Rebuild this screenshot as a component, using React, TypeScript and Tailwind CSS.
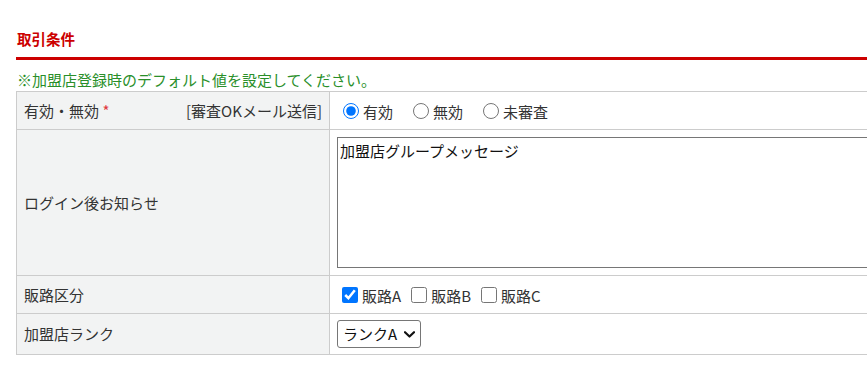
import { useState } from "react";

const radios = ["有効", "無効", "未審査"];
const routes = ["販路A", "販路B", "販路C"];

export default function App() {
  const [status, setStatus] = useState("有効");
  const [checked, setChecked] = useState<string[]>(["販路A"]);

  return (
    <div className="w-full min-h-[384px] overflow-hidden bg-white pl-4 text-[15px] text-[#333] font-['Noto_Sans_CJK_JP','Noto_Sans',sans-serif]">
      <h2 className="w-[1000px] border-b-[3px] border-[#cc0000] pl-px pt-[28px] pb-[7px] text-[14.5px] font-bold leading-[22px] text-[#cc0000]">
        取引条件
      </h2>
      <p className="mt-[9px] pl-px leading-[22px] text-[#2a8f2a]">
        ※加盟店登録時のデフォルト値を設定してください。
      </p>
      <table className="w-[1000px] border-collapse">
        <tbody>
          <tr>
            <th className="h-[38px] w-[313px] border border-[#cccccc] bg-[#f2f3f3] px-[7px] text-left font-normal leading-[22px]">
              <div className="flex justify-between">
                <span>
                  有効・無効 <span className="text-[#e0393e]">*</span>
                </span>
                <span>[審査OKメール送信]</span>
              </div>
            </th>
            <td className="border border-[#cccccc] px-[7px] leading-[22px]">
              <div className="flex items-center pl-[6px] gap-[20px]">
                {radios.map((r) => (
                  <label key={r} className="flex items-center gap-[4px]">
                    <input
                      type="radio"
                      name="status"
                      className="h-4 w-4 accent-[#0075ff]"
                      checked={status === r}
                      onChange={() => setStatus(r)}
                    />
                    <span className="mt-[3px]">{r}</span>
                  </label>
                ))}
              </div>
            </td>
          </tr>
          <tr>
            <th className="border border-[#cccccc] bg-[#f2f3f3] px-[7px] text-left font-normal leading-[22px]">
              ログイン後お知らせ
            </th>
            <td className="border border-[#cccccc] px-[7px] py-[7px]">
              <textarea
                className="block h-[131px] w-[600px] resize-none border border-[#767676] px-[2px] py-[2px] leading-[22px] text-[#111]"
                defaultValue="加盟店グループメッセージ"
              />
            </td>
          </tr>
          <tr>
            <th className="h-[38px] border border-[#cccccc] bg-[#f2f3f3] px-[7px] text-left font-normal leading-[22px]">
              販路区分
            </th>
            <td className="border border-[#cccccc] px-[7px] leading-[22px]">
              <div className="flex items-center pl-[5px] gap-[10px]">
                {routes.map((r) => (
                  <label key={r} className="flex items-center gap-[4px]">
                    <input
                      type="checkbox"
                      className="h-4 w-4 accent-[#0075ff]"
                      checked={checked.includes(r)}
                      onChange={() =>
                        setChecked((c) => (c.includes(r) ? c.filter((x) => x !== r) : [...c, r]))
                      }
                    />
                    <span className="mt-[3px]">{r}</span>
                  </label>
                ))}
              </div>
            </td>
          </tr>
          <tr>
            <th className="h-[41px] border border-[#cccccc] bg-[#f2f3f3] px-[7px] text-left font-normal leading-[22px]">
              加盟店ランク
            </th>
            <td className="border border-[#cccccc] px-[7px]">
              <div className="relative inline-block align-middle">
                <select className="block h-[28px] w-[84px] appearance-none rounded-[3px] border border-[#767676] bg-white pl-[5px] pr-[22px] leading-[26px] text-[#111]">
                  <option>ランクA</option>
                  <option>ランクB</option>
                  <option>ランクC</option>
                </select>
                <svg
                  className="pointer-events-none absolute right-[6px] top-[11px]"
                  width="11"
                  height="7"
                  viewBox="0 0 11 7"
                  fill="none"
                >
                  <path d="M1 1.2l4.5 4.3L10 1.2" stroke="#111" strokeWidth="2.2" strokeLinecap="round" strokeLinejoin="round" />
                </svg>
              </div>
            </td>
          </tr>
        </tbody>
      </table>
    </div>
  );
}
